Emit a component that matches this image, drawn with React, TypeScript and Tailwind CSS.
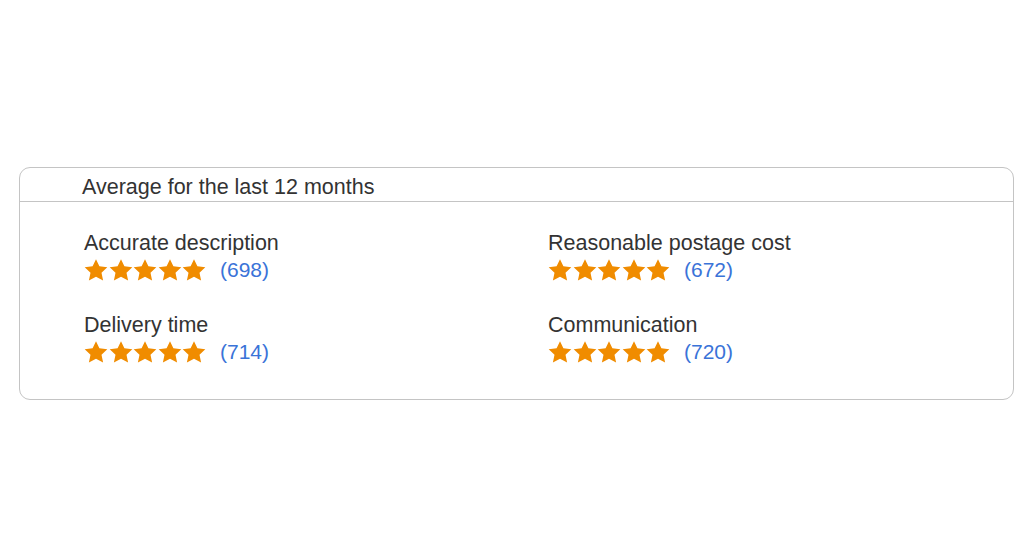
import React from "react";

const ratings = [
  { label: "Accurate description", count: 698 },
  { label: "Reasonable postage cost", count: 672 },
  { label: "Delivery time", count: 714 },
  { label: "Communication", count: 720 },
];

function Star() {
  return (
    <svg width="24" height="23" viewBox="0 0 24 23" className="shrink-0">
      <path
        d="M12 0.3l3.4 7 7.9 1-5.8 5.4 1.6 7.8L12 17.7l-7.1 3.8 1.6-7.8L0.7 8.3l7.9-1z"
        fill="#f08c00"
      />
    </svg>
  );
}

export default function App() {
  return (
    <div
      className="w-[1024px] h-[536px] bg-white pt-[167px] pl-[19px] text-[#333333]"
      style={{ fontFamily: '"Liberation Sans", Arial, sans-serif' }}
    >
      <div className="w-[995px] h-[233px] border border-[#c4c4c4] rounded-[11px]">
        {/* Header */}
        <div className="h-[34px] border-b border-[#c4c4c4] pl-[62px] pt-[7px] text-[21.5px] leading-[24px]">
          Average for the last 12 months
        </div>

        {/* Ratings grid */}
        <div className="grid grid-cols-[464px_1fr] gap-y-[31px] pl-[64px] pt-[29px]">
          {ratings.map((r) => (
            <div key={r.label}>
              <div className="text-[21.5px] leading-[24px]">{r.label}</div>
              <div className="flex items-center mt-[3px] h-[24px]">
                <div className="flex gap-[0.5px]">
                  <Star />
                  <Star />
                  <Star />
                  <Star />
                  <Star />
                </div>
                <span className="ml-[14px] text-[21px] leading-[24px] text-[#3a73d8]">
                  ({r.count})
                </span>
              </div>
            </div>
          ))}
        </div>
      </div>
    </div>
  );
}
